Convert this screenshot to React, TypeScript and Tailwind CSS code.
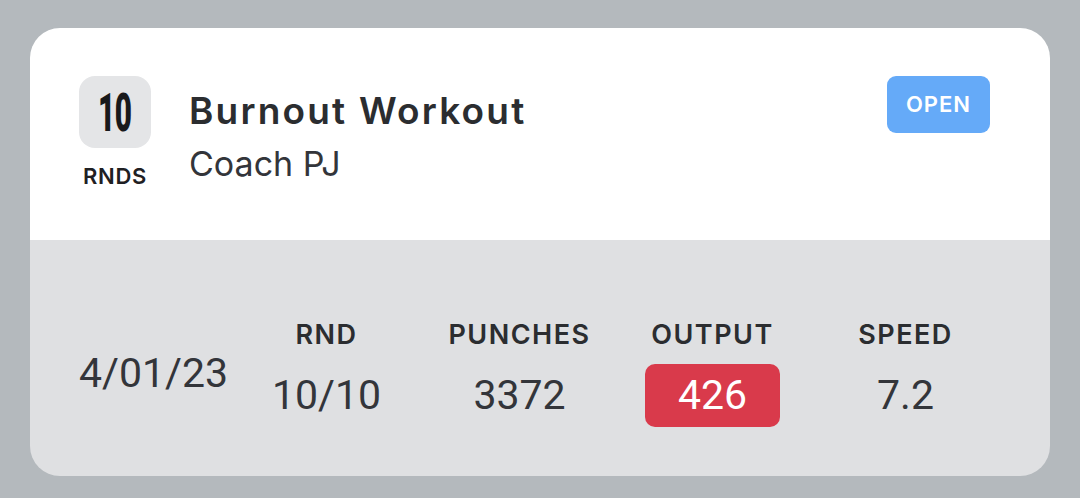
import React from "react";

const stats = [
  { label: "RND", value: "10/10" },
  { label: "PUNCHES", value: "3372" },
  { label: "OUTPUT", value: "426", highlight: true },
  { label: "SPEED", value: "7.2" },
];

export default function App() {
  return (
    <div className="w-[1080px] h-[498px] bg-[#b4b9bd] pt-[28px] px-[30px] font-['Inter',sans-serif] text-[#2b2d30]">
      <div className="h-[448px] rounded-[30px] overflow-hidden flex flex-col">
        <div className="h-[212px] bg-white flex pl-[49px] pr-[60px] pt-[48px]">
          <div className="w-[72px] flex flex-col items-center">
            <div className="w-[72px] h-[72px] rounded-[16px] bg-[#e4e5e7] flex items-center justify-center">
              <span className="font-['Roboto',sans-serif] font-black text-[53px] leading-none text-[#18191b] scale-x-[0.56] tracking-[-1px] mt-[2px]">10</span>
            </div>
            <div className="mt-[16px] text-[22px] leading-[24px] font-semibold tracking-[0.7px] text-[#1f2023]">RNDS</div>
          </div>
          <div className="ml-[38px] flex flex-col pt-[15px]">
            <div className="text-[37px] leading-[40px] font-semibold tracking-[2.2px] text-[#2b2d30]">Burnout Workout</div>
            <div className="text-[34px] leading-[40px] font-normal text-[#33353a] mt-[13px]">Coach PJ</div>
          </div>
          <div className="ml-auto">
            <div className="w-[103px] h-[57px] rounded-[9px] bg-[#65aaf8] flex items-center justify-center text-white text-[22px] font-semibold tracking-[1px]">OPEN</div>
          </div>
        </div>
        <div className="flex-1 bg-[#dfe0e2] flex items-center pl-[49px] pt-[34px] font-['Roboto',sans-serif]">
          <div className="w-[151px] text-[41px] font-normal text-[#33353a] -mt-[2px]">4/01/23</div>
          <div className="grid grid-cols-4 w-[772px] -mt-[4px]">
            {stats.map((s) => (
              <div key={s.label} className="flex flex-col items-center">
                <div className="font-['Inter',sans-serif] text-[27px] leading-[30px] font-semibold tracking-[1.5px] text-[#2b2d30]">{s.label}</div>
                {s.highlight ? (
                  <div className="mt-[14px] w-[135px] h-[63px] rounded-[10px] bg-[#d93a4b] flex items-center justify-center text-white text-[41px] leading-none">{s.value}</div>
                ) : (
                  <div className="mt-[14px] h-[63px] flex items-center text-[41px] leading-none text-[#33353a]">{s.value}</div>
                )}
              </div>
            ))}
          </div>
        </div>
      </div>
    </div>
  );
}
